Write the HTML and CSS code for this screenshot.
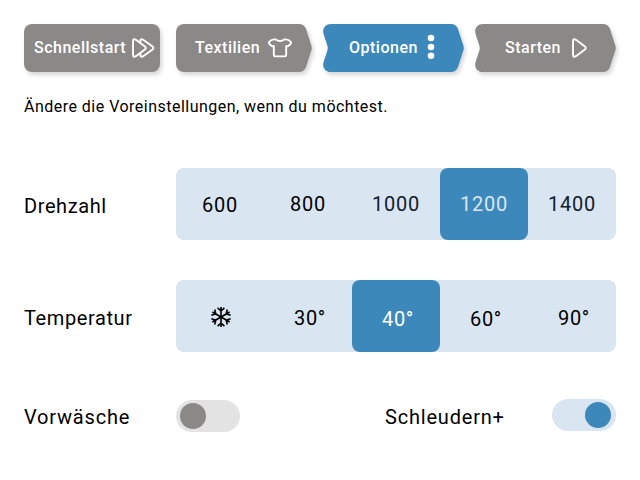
FILE: index.html
```
<!DOCTYPE html>
<html lang="de">
<head>
    <meta charset="UTF-8">
    <meta name="viewport" content="width=device-width, initial-scale=1.0">
    <title>Waschmaschine - Optionen</title>
    <link rel="stylesheet" href="styles.css">
</head>
<body>
    <!-- Schritte -->
    <nav class="steps">
        <a class="step quick">
            <svg class="shape" width="136" height="48"><rect width="136" height="48" rx="8"/></svg>
            <span>Schnellstart</span>
            <svg class="icon" width="24" height="20" viewBox="0 0 24 20">
                <path d="M8.3 5V3.4Q8.3 .2 11.2 1.8L20.2 8.2Q22.6 10 20.2 11.8L11.2 18.2Q8.3 19.8 8.3 16.6V15"/>
                <path d="M1 3.4Q1 .2 3.9 1.8L12.6 8.2Q15 10 12.6 11.8L3.9 18.2Q1 19.8 1 16.6Z"/>
            </svg>
        </a>
        <a class="step textiles">
            <svg class="shape" width="136" height="48"><path d="M8 0H123Q128 0 130 5L135.5 22Q136 24 135.5 26L130 43Q128 48 123 48H8A8 8 0 0 1 0 40V8A8 8 0 0 1 8 0Z"/></svg>
            <span>Textilien</span>
            <svg class="icon" width="24" height="20" viewBox="0 0 24 20">
                <path d="M7.6 1.5Q12 4.6 16.4 1.5Q20.5 1 22.6 3.6Q23.6 5 22.3 6.2L20.6 7.8Q19.8 8.6 18.2 7.9V16.4Q18.2 18.4 16.2 18.4H7.8Q5.8 18.4 5.8 16.4V7.9Q4.2 8.6 3.4 7.8L1.7 6.2Q.4 5 1.4 3.6Q3.5 1 7.6 1.5Z"/>
            </svg>
        </a>
        <a class="step options active">
            <svg class="shape" width="141" height="48"><path d="M8 0H128Q133 0 135 5L140.5 22Q141 24 140.5 26L135 43Q133 48 128 48H8C2 48 -1 43 .6 38L4.5 26Q5 24 4.5 22L.6 10C-1 5 2 0 8 0Z"/></svg>
            <span>Optionen</span>
            <svg class="dots" width="8" height="26" viewBox="0 0 8 26">
                <circle cx="4" cy="4" r="3.3"/>
                <circle cx="4" cy="13" r="3.3"/>
                <circle cx="4" cy="21.8" r="3.3"/>
            </svg>
        </a>
        <a class="step start">
            <svg class="shape" width="141" height="48"><path d="M8 0H128Q133 0 135 5L140.5 22Q141 24 140.5 26L135 43Q133 48 128 48H8C2 48 -1 43 .6 38L4.5 26Q5 24 4.5 22L.6 10C-1 5 2 0 8 0Z"/></svg>
            <span>Starten</span>
            <svg class="icon" width="16" height="20" viewBox="0 0 16 20">
                <path d="M1 3.4Q1 .2 3.9 1.8L12.6 8.2Q15 10 12.6 11.8L3.9 18.2Q1 19.8 1 16.6Z"/>
            </svg>
        </a>
    </nav>

    <p class="hint">Ändere die Voreinstellungen, wenn du möchtest.</p>

    <!-- Auswahl -->
    <section class="row">
        <h2>Drehzahl</h2>
        <div class="choices">
            <button class="low">600</button>
            <button>800</button>
            <button class="dark">1000</button>
            <button class="selected pale">1200</button>
            <button class="dark">1400</button>
        </div>
    </section>
    <section class="row">
        <h2>Temperatur</h2>
        <div class="choices temperature">
            <button class="cold" aria-label="Kalt">
                <svg width="22" height="22" viewBox="-11 -11 22 22">
                    <defs>
                        <path id="arm" d="M0 0V-10M-3.4 -9.2L0 -6L3.4 -9.2"/>
                    </defs>
                    <use href="#arm"/>
                    <use href="#arm" transform="rotate(60)"/>
                    <use href="#arm" transform="rotate(120)"/>
                    <use href="#arm" transform="rotate(180)"/>
                    <use href="#arm" transform="rotate(240)"/>
                    <use href="#arm" transform="rotate(300)"/>
                </svg>
            </button>
            <button>30°</button>
            <button class="selected low">40°</button>
            <button class="low">60°</button>
            <button>90°</button>
        </div>
    </section>

    <!-- Schalter -->
    <section class="switches">
        <h2>Vorwäsche</h2>
        <div class="switch"><i></i></div>
        <h2 class="spin">Schleudern+</h2>
        <div class="switch on"><i></i></div>
    </section>
</body>
</html>
```
FILE: styles.css
```
body {
    margin: 0;
    padding: 24px;
    background-color: #fff;
    color: #000;
    font-family: Roboto, sans-serif;
}

.steps {
    display: flex;
    height: 48px;
}

.step {
    position: relative;
    display: flex;
    align-items: center;
    box-sizing: border-box;
    width: 136px;
    color: #fff;
    font-size: 16px;
    font-weight: 500;
    letter-spacing: 0.5px;
}

.step span,
.icon,
.dots {
    position: relative;
}

.step span {
    padding-bottom: 2px;
}

/* Hintergrund der Schaltfläche */
.shape {
    position: absolute;
    left: 0;
    top: 0;
    overflow: visible;
    fill: #8b8888;
    filter: drop-shadow(2px 3px 2px rgba(0, 0, 0, 0.16));
}

.active .shape {
    fill: #3d88bb;
}

.icon {
    flex: none;
    margin-bottom: 1px;
    fill: none;
    stroke: #fff;
    stroke-width: 1.9;
    stroke-linejoin: round;
    stroke-linecap: round;
}

.dots {
    fill: #fff;
    margin-left: 9px;
    margin-top: -2px;
}

.quick {
    padding-left: 10px;
}

.quick .icon {
    margin-left: 6px;
}

.textiles {
    margin-left: 16px;
    padding-left: 19px;
}

.textiles .icon {
    margin-left: 8px;
}

.options {
    width: 141px;
    margin-left: 11px;
    padding-left: 26px;
}

.start {
    width: 141px;
    margin-left: 11px;
    padding-left: 30px;
}

.start .icon {
    margin-left: 11px;
}

.hint {
    margin: 25px 0 51px;
    font-size: 16px;
    line-height: 20px;
    letter-spacing: 0.48px;
}

h2 {
    width: 152px;
    margin: 0;
    font-size: 20px;
    font-weight: 400;
    line-height: 24px;
    letter-spacing: 0.8px;
}

.row {
    display: flex;
    align-items: center;
    height: 72px;
    margin-bottom: 40px;
}

.row h2 {
    padding-top: 4px;
    letter-spacing: 0.6px;
}

.choices {
    display: grid;
    grid-template-columns: repeat(5, 88px);
    height: 72px;
    border-radius: 8px;
    background-color: #d9e6f1;
}

.choices button {
    padding: 0;
    border: none;
    border-radius: 8px;
    background: none;
    color: #000;
    font-family: inherit;
    font-size: 20px;
    line-height: 24px;
    letter-spacing: 0.7px;
}

.choices .low {
    padding-top: 2px;
}

.choices .dark {
    color: #10202c;
}

.choices .selected {
    background-color: #3d88bb;
    color: #fff;
}

.choices .pale {
    color: #d9e6f1;
}

.temperature button {
    padding: 4px 0 0 4px;
}

.temperature .low {
    padding-top: 6px;
}

.temperature .cold {
    padding: 2px 0 0 2px;
}

.cold svg {
    display: block;
    margin: 0 auto;
    fill: none;
    stroke: #000;
    stroke-width: 1.6;
}

.switches {
    display: flex;
    align-items: center;
    height: 32px;
    margin-top: 48px;
}

.switches h2 {
    padding-top: 2px;
}

.switch {
    box-sizing: border-box;
    width: 64px;
    height: 32px;
    padding: 3px 4px;
    border-radius: 16px;
    background-color: #e3e3e3;
}

.switch i {
    display: block;
    width: 26px;
    height: 26px;
    border-radius: 50%;
    background-color: #8b8888;
}

.switch.on {
    margin-bottom: 2px;
    background-color: #d9e6f1;
}

.switch.on i {
    margin-left: 29px;
    background-color: #3d88bb;
}

.spin {
    width: 167px;
    margin-left: 145px;
}
```
